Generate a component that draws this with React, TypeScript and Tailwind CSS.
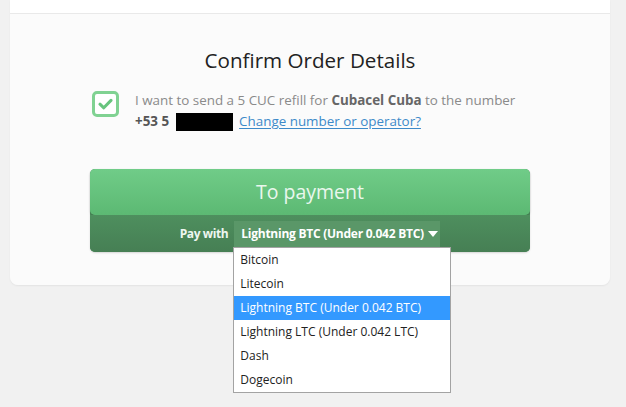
import React from "react";

const font = { fontFamily: '"Open Sans", "Noto Sans", "DejaVu Sans", sans-serif' };

export default function App() {
  const items = [
    "Bitcoin",
    "Litecoin",
    "Lightning BTC (Under 0.042 BTC)",
    "Lightning LTC (Under 0.042 LTC)",
    "Dash",
    "Dogecoin",
  ];
  return (
    <div className="min-h-[407px] w-[626px] bg-[#f1f1f1] pl-[10px]" style={font}>
      <div className="w-[600px] rounded-b-[8px] shadow-[0_1px_2px_rgba(0,0,0,0.06)]">
        <div className="h-[14px] bg-white border-b border-[#e9e9e9]" />
        <div className="bg-[#fbfbfb] rounded-b-[8px] pt-[32px] pb-[33px] flex flex-col items-center">
          <h1 className="text-[20.6px] leading-[28px] text-[#222] font-normal">Confirm Order Details</h1>
          <div className="mt-[17px] flex w-[440px] pl-[2px]">
            <div className="w-[27px] h-[26px] rounded-[5px] border-[3px] border-[#80d292] bg-white flex items-center justify-center shrink-0">
              <svg width="15" height="12" viewBox="0 0 15 12">
                <path d="M2 6.2 L5.8 9.8 L13 2.4" fill="none" stroke="#67c47d" strokeWidth="3" strokeLinecap="round" strokeLinejoin="round" />
              </svg>
            </div>
            <div className="ml-[16px] text-[13.4px] leading-[21px] text-[#8a8a8a] -mt-[1px] whitespace-nowrap">
              <div>
                I want to send a 5 CUC refill for <b className="text-[#666] font-bold">Cubacel Cuba</b> to the number
              </div>
              <div className="flex items-center">
                <b className="text-[#555] font-bold">+53 5</b>
                <span className="inline-block w-[57px] h-[18px] bg-black ml-[7px]" />
                <a className="ml-[6px] text-[#3d8ac9] underline underline-offset-2">Change number or operator?</a>
              </div>
            </div>
          </div>
          <div className="mt-[37px] w-[440px] rounded-[5px] bg-[#4b8c5b] shadow-[0_1px_2px_rgba(0,0,0,0.15)]">
            <div className="h-[46px] rounded-[5px] bg-gradient-to-b from-[#70cc88] to-[#5cb973] flex items-center justify-center shadow-[0_1px_2px_rgba(0,0,0,0.2)]">
              <span className="text-[19.5px] text-[#eaf7ed]">To payment</span>
            </div>
            <div className="h-[37px] rounded-b-[5px] bg-gradient-to-b from-[#4e8f5e] to-[#467f54] flex items-start justify-center gap-[6px] pt-[6px]">
              <span className="text-[12px] leading-[26px] font-bold text-[#eef6f0] tracking-[-0.4px]">Pay with</span>
              <div className="relative">
                <div className="w-[206px] h-[26px] bg-[#5a9768] flex items-center pl-[7px] text-[12px] font-bold text-white whitespace-nowrap tracking-[-0.25px]">
                  Lightning BTC (Under 0.042 BTC)
                  <svg className="ml-[4px]" width="10" height="6" viewBox="0 0 10 6">
                    <path d="M0 0 H10 L5 6 Z" fill="#ffffff" />
                  </svg>
                </div>
                <div className="absolute left-[-1px] top-[26px] w-[218px] bg-white border border-[#a3a3a3] z-10">
                  {items.map((it, i) => (
                    <div
                      key={it}
                      className={
                        i === 2
                          ? "h-[24px] flex items-center pl-[6px] text-[12px] bg-[#3399ff] text-white"
                          : "h-[24px] flex items-center pl-[6px] text-[12px] text-[#222]"
                      }
                    >
                      {it}
                    </div>
                  ))}
                </div>
              </div>
            </div>
          </div>
        </div>
      </div>
    </div>
  );
}
